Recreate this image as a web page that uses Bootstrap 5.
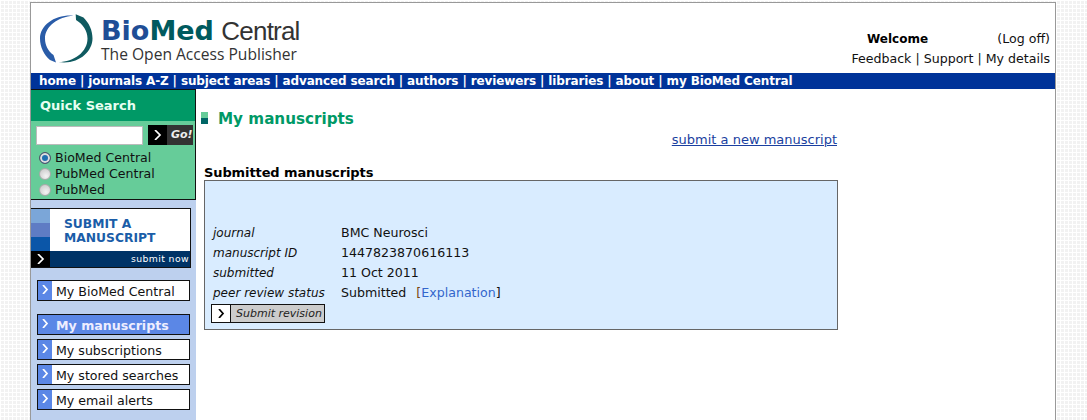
<!DOCTYPE html>
<html lang="en">
<head>
    <title>BioMed Central - My manuscripts</title>
    <link href="https://cdn.jsdelivr.net/npm/bootstrap@5.3.3/dist/css/bootstrap.min.css" rel="stylesheet">
    <style>
        html, body { height: 420px; overflow: hidden; }
        body {
            font-family: "DejaVu Sans", Verdana, sans-serif;
            font-size: 13px;
            line-height: 16px;
            color: #111;
            background-color: #f2f2f2;
            background-image: linear-gradient(#fff 1px, transparent 1px), linear-gradient(90deg, #fff 1px, transparent 1px);
            background-size: 4px 4px;
        }
        a { color: inherit; text-decoration: none; }
        .page-wrap {
            width: 1026px;
            height: 430px;
            margin: 2px 0 0 30px;
            background: #fff;
            border: 1px solid #999;
            border-bottom: 0;
        }
        .top-head { height: 70px; padding: 8px 5px 0 7px; }
        .brand-text { padding: 5px 0 0 5px; }
        .brand-name { font-family: "Liberation Sans", Arial, sans-serif; font-size: 26px; line-height: 30px; letter-spacing: -0.8px; color: #333; white-space: nowrap; }
        .brand-name b { font-family: "DejaVu Sans", sans-serif; font-size: 27px; letter-spacing: 0; color: #1f4e96; font-weight: 700; margin-right: 1px; }
        .brand-name b span { color: #005a5e; }
        .brand-sub { font-family: "Open Sans", sans-serif; font-size: 15.6px; line-height: 16px; color: #333; white-space: nowrap; }
        .user-links { padding-top: 18px; line-height: 20px; text-align: right; width: 220px; white-space: nowrap; font-size: 12.6px; }
        .user-links b { font-size: 12px; margin-left: 37px; }
        .main-menu { height: 16px; background: #003399; color: #fff; font-size: 12px; font-weight: 700; letter-spacing: -0.13px; line-height: 16px; padding-left: 8px; white-space: nowrap; }
        .side-col { width: 165px; min-height: 340px; background: #bdd0ee; flex: none; font-size: 12.6px; }
        .quick-box { height: 111px; background: #66cc99; border: 1px solid #111; border-left: 0; }
        .quick-title { height: 31px; background: #009966; color: #e8fff2; font-weight: 700; padding: 8px 0 0 9px; font-size: 13px; }
        .quick-input { width: 107px; height: 19px; margin: 5px 5px 0 5px; background: #fff; border: 1px solid #bbb; }
        .go-btn { width: 45px; height: 20px; margin-top: 4px; background: #333; color: #eee; font-weight: 700; font-style: italic; font-size: 11px; line-height: 20px; }
        .go-btn i { width: 19px; height: 20px; background: #000; }
        .radio-list { padding-top: 5px; }
        .radio-row { padding-left: 8px; height: 16px; color: #111; white-space: nowrap; }
        .radio-dot { width: 12px; height: 12px; border-radius: 50%; margin-right: 4px; background: radial-gradient(circle at 60% 70%, #f4f4f4, #c4c4c4); border: 1px solid #aaa; flex: none; }
        .radio-dot.on { background: #1f6fb0; box-shadow: inset 0 0 0 2px #ddd; border-color: #556; }
        .submit-box { height: 60px; margin-top: 8px; border: 1px solid #111; border-left: 0; width: 160px; background: #fff; }
        .stripe-col { width: 19px; flex: none; }
        .stripe-col div { height: 14px; }
        .submit-words { color: #1a5da8; font-weight: 700; font-size: 12.3px; line-height: 14px; padding: 8px 0 0 14px; height: 42px; }
        .submit-foot { height: 16px; background: #003366; color: #fff; font-size: 9.3px; line-height: 16px; text-align: right; padding-right: 1px; letter-spacing: 0.4px; }
        .side-link { height: 21px; width: 153px; margin-left: 6px; border: 1px solid #111; background: #fff; line-height: 21px; white-space: nowrap; }
        .side-link i { width: 14px; height: 19px; background: #5b87e6; margin-right: 4px; flex: none; }
        .side-link.active { background: #5b87e6; color: #eef; font-weight: 700; }
        .side-first { margin-top: 12px; margin-bottom: 13px; }
        .title-mark { width: 7px; height: 12px; margin: 3px 0 0 5px; background: linear-gradient(#66cc99 50%, #006666 50%); }
        .page-title { color: #009966; font-size: 15.2px; font-weight: 700; line-height: 18px; margin-left: 10px; padding-top: 1px; }
        .new-link { width: 641px; text-align: right; color: #1a3fa0; text-decoration: underline; margin-top: 4px; }
        .sub-head { font-weight: 700; margin: 17px 0 0 8px; line-height: 15px; color: #000; letter-spacing: -0.1px; }
        .info-box { width: 634px; height: 150px; margin-left: 8px; background: #d9ecff; border: 1px solid #666; padding: 43px 0 0 8px; font-size: 12.6px; }
        .info-row { height: 20px; line-height: 18px; white-space: nowrap; }
        .info-row em { width: 128px; flex: none; font-size: 12px; }
        .explain { color: #3366cc; }
        .bracket { color: #7a4a10; margin-left: 6px; }
        .bracket-end { color: #111; }
        .revise-btn { width: 114px; height: 19px; border: 1px solid #111; background: #ccc; margin-left: -2px; font-style: italic; font-size: 11px; line-height: 18px; color: #222; white-space: nowrap; }
        .revise-btn i { width: 19px; height: 17px; background: #fff; border-right: 1px solid #111; margin-right: 5px; flex: none; }
    </style>
</head>
<body>

<div class="page-wrap">
    <!-- Header -->
    <div class="top-head d-flex justify-content-between">
        <div class="d-flex">
            <svg width="58" height="54" viewBox="0 0 58 54">
                <path d="M35.300 4.700C17 3.500 2 14 2 27.500 2 36 6 44 12 49l6 2.500-2.500-7.500C10 40 7 34 7 27.500 7 15 20 6 35.300 4.700z" fill="#2a5ca8"/>
                <path d="M37.700 3.300l7.800 3.200C51 12 54.500 19 54.500 27.500 54.500 41 40 54 20.500 51 36 51 49.500 41 49.500 27.500 49.500 20 45 13 38 9z" fill="#0f5a60"/>
            </svg>
            <div class="brand-text">
                <div class="brand-name"><b>Bio<span>Med</span></b> Central</div>
                <div class="brand-sub">The Open Access Publisher</div>
            </div>
        </div>
        <div class="user-links">
            <div class="d-flex justify-content-between"><b class="text-black">Welcome</b><a href="#">(Log off)</a></div>
            <div><a href="#">Feedback</a> | <a href="#">Support</a> | <a href="#">My details</a></div>
        </div>
    </div>

    <div class="main-menu">home | journals A-Z | subject areas | advanced search | authors | reviewers | libraries | about | my BioMed Central</div>

    <div class="d-flex">
        <!-- Sidebar -->
        <div class="side-col">
            <div class="quick-box">
                <div class="quick-title">Quick Search</div>
                <div class="d-flex">
                    <div class="quick-input"></div>
                    <div class="go-btn d-flex">
                        <i class="d-flex align-items-center justify-content-center"><svg width="8" height="10" viewBox="0 0 8 10"><path d="M1 0l5 5-5 5" fill="none" stroke="#fff" stroke-width="1.700"/></svg></i>
                        <span class="ms-1">Go!</span>
                    </div>
                </div>
                <div class="radio-list">
                    <div class="radio-row d-flex align-items-center"><span class="radio-dot on"></span>BioMed Central</div>
                    <div class="radio-row d-flex align-items-center"><span class="radio-dot"></span>PubMed Central</div>
                    <div class="radio-row d-flex align-items-center"><span class="radio-dot"></span>PubMed</div>
                </div>
            </div>

            <div class="submit-box">
                <div class="d-flex">
                    <div class="stripe-col">
                        <div style="background:#7ba6d8"></div>
                        <div style="background:#5f7cc4"></div>
                        <div style="background:#0b56a8"></div>
                    </div>
                    <div class="submit-words flex-grow-1">SUBMIT A<br>MANUSCRIPT</div>
                </div>
                <div class="d-flex">
                    <div class="stripe-col bg-black d-flex align-items-center justify-content-center"><svg width="8" height="10" viewBox="0 0 8 10"><path d="M1 0l5 5-5 5" fill="none" stroke="#fff" stroke-width="1.700"/></svg></div>
                    <div class="submit-foot flex-grow-1">submit now</div>
                </div>
            </div>

            <a href="#" class="side-link side-first d-flex"><i class="d-flex justify-content-center pt-1"><svg width="7" height="9" viewBox="0 0 7 9"><path d="M1 0l4 4.500-4 4.500" fill="none" stroke="#fff" stroke-width="1.700"/></svg></i>My BioMed Central</a>
            <a href="#" class="side-link active d-flex"><i class="d-flex justify-content-center pt-1"><svg width="7" height="9" viewBox="0 0 7 9"><path d="M1 0l4 4.500-4 4.500" fill="none" stroke="#fff" stroke-width="1.700"/></svg></i>My manuscripts</a>
            <a href="#" class="side-link d-flex mt-1"><i class="d-flex justify-content-center pt-1"><svg width="7" height="9" viewBox="0 0 7 9"><path d="M1 0l4 4.500-4 4.500" fill="none" stroke="#fff" stroke-width="1.700"/></svg></i>My subscriptions</a>
            <a href="#" class="side-link d-flex mt-1"><i class="d-flex justify-content-center pt-1"><svg width="7" height="9" viewBox="0 0 7 9"><path d="M1 0l4 4.500-4 4.500" fill="none" stroke="#fff" stroke-width="1.700"/></svg></i>My stored searches</a>
            <a href="#" class="side-link d-flex mt-1"><i class="d-flex justify-content-center pt-1"><svg width="7" height="9" viewBox="0 0 7 9"><path d="M1 0l4 4.500-4 4.500" fill="none" stroke="#fff" stroke-width="1.700"/></svg></i>My email alerts</a>
        </div>

        <!-- Main content -->
        <div class="flex-grow-1 pt-3">
            <div class="d-flex mt-1">
                <div class="title-mark"></div>
                <div class="page-title">My manuscripts</div>
            </div>
            <div class="new-link"><a href="#">submit a new manuscript</a></div>
            <div class="sub-head">Submitted manuscripts</div>
            <div class="info-box">
                <div class="info-row d-flex"><em>journal</em><span>BMC Neurosci</span></div>
                <div class="info-row d-flex"><em>manuscript ID</em><span>1447823870616113</span></div>
                <div class="info-row d-flex"><em>submitted</em><span>11 Oct 2011</span></div>
                <div class="info-row d-flex"><em>peer review status</em><span>Submitted <span class="bracket">[</span><a href="#" class="explain">Explanation</a><span class="bracket-end">]</span></span></div>
                <div class="revise-btn d-flex"><i class="d-flex align-items-center justify-content-center"><svg width="7" height="9" viewBox="0 0 7 9"><path d="M1 0l4 4.500-4 4.500" fill="none" stroke="#000" stroke-width="1.700"/></svg></i>Submit revision</div>
            </div>
        </div>
    </div>
</div>

<script src="https://cdn.jsdelivr.net/npm/bootstrap@5.3.3/dist/js/bootstrap.bundle.min.js"></script>
</body>
</html>
